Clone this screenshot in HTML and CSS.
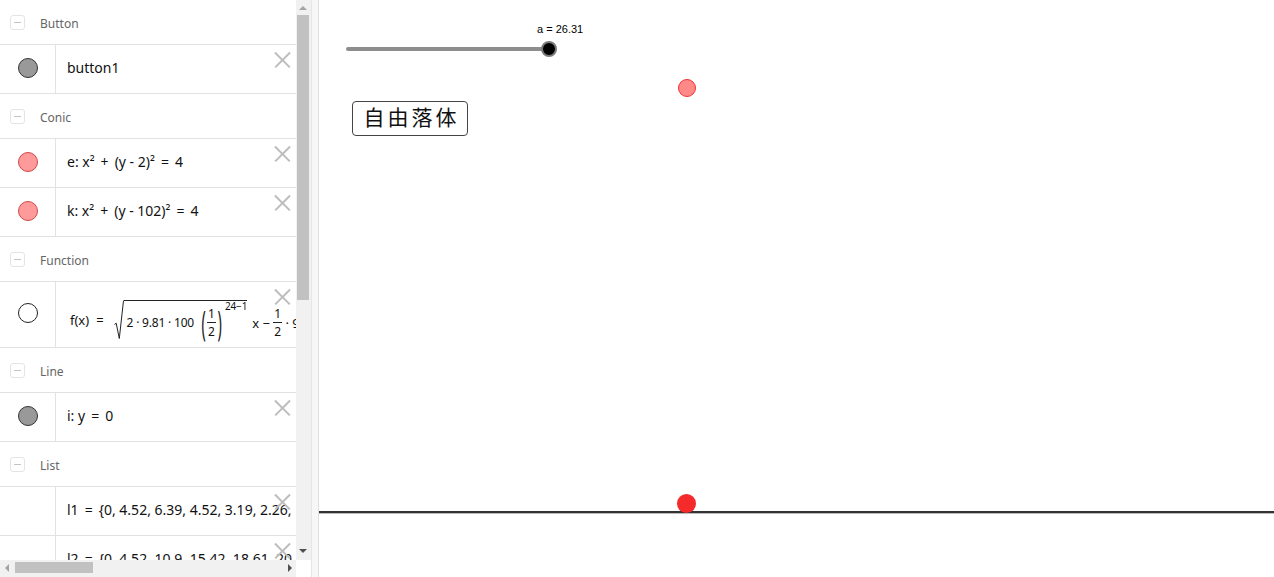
FILE: index.html
```html
<!DOCTYPE html>
<html>
<head>
<meta charset="utf-8">
<link rel="stylesheet" href="styles.css">
</head>
<body>
<div class="app">
  <div class="algebra">
    <div class="list">
      <div class="header"><span class="minus"></span><span class="hlabel">Button</span></div>
      <div class="item">
        <div class="marker"><span class="dot gray"></span></div>
        <div class="content">button1</div>
        <span class="close"></span>
      </div>
      <div class="header"><span class="minus"></span><span class="hlabel">Conic</span></div>
      <div class="item">
        <div class="marker"><span class="dot pink"></span></div>
        <div class="content">e: x²<span class="op">+</span>(y - 2)²<span class="op">=</span>4</div>
        <span class="close"></span>
      </div>
      <div class="item">
        <div class="marker"><span class="dot pink"></span></div>
        <div class="content">k: x²<span class="op">+</span>(y - 102)²<span class="op">=</span>4</div>
        <span class="close"></span>
      </div>
      <div class="header"><span class="minus"></span><span class="hlabel">Function</span></div>
      <div class="item tall">
        <div class="marker"><span class="dot empty"></span></div>
        <div class="content formula">
          <span class="fx">f(x)<span class="op wide">=</span></span>
          <span class="sqrt">
            <svg class="rad" width="10" height="40" viewBox="0 0 10 40"><path d="M0.5 24.5 L2.2 23.2 L5.3 38.5 L9.5 0.5" fill="none" stroke="#222" stroke-width="1"/></svg>
            <span class="radicand"><span class="num-run">2 · 9.81 · 100</span><span class="paren">(</span><span class="frac"><span class="num">1</span><span class="den">2</span></span><span class="paren">)</span><span class="exp">24−1</span></span>
          </span>
          <span class="after">x − <span class="frac"><span class="num">1</span><span class="den">2</span></span> · 9</span>
        </div>
        <span class="close"></span>
      </div>
      <div class="header"><span class="minus"></span><span class="hlabel">Line</span></div>
      <div class="item">
        <div class="marker"><span class="dot gray"></span></div>
        <div class="content">i: y<span class="op">=</span>0</div>
        <span class="close"></span>
      </div>
      <div class="header"><span class="minus"></span><span class="hlabel">List</span></div>
      <div class="item">
        <div class="marker"></div>
        <div class="content">l1<span class="op">=</span>{0, 4.52, 6.39, 4.52, 3.19, 2.26, 1.60, 1.13}</div>
        <span class="close"></span>
      </div>
      <div class="item">
        <div class="marker"></div>
        <div class="content">l2<span class="op">=</span>{0, 4.52, 10.9, 15.42, 18.61, 20.87, 22.47}</div>
        <span class="close"></span>
      </div>
    </div>
    <div class="vscroll">
      <span class="arrow up"></span>
      <span class="vthumb"></span>
      <span class="arrow down"></span>
    </div>
    <div class="hscroll">
      <span class="arrow left"></span>
      <span class="hthumb"></span>
      <span class="arrow right"></span>
    </div>
    <div class="corner"></div>
  </div>
  <div class="divider"></div>
  <div class="graphics">
    <div class="slider">
      <span class="track"></span>
      <span class="knob"></span>
      <span class="slabel">a = 26.31</span>
    </div>
    <div class="gbutton">自由落体</div>
    <span class="point upper"></span>
    <span class="axisline"></span>
    <span class="point lower"></span>
  </div>
</div>
</body>
</html>
```
FILE: styles.css
```css
html, body {
  margin: 0;
  padding: 0;
  background: #fff;
}
.app {
  width: 1274px;
  height: 577px;
  display: flex;
  overflow: hidden;
  font-family: "Noto Sans", "DejaVu Sans", sans-serif;
}
.algebra {
  width: 311px;
  height: 577px;
  display: grid;
  grid-template-columns: 296px 15px;
  grid-template-rows: 560px 17px;
}
.list {
  overflow: hidden;
  background: #fff;
}
.header {
  border-bottom: 1px solid #e2e2e2;
  display: flex;
  align-items: center;
  padding-top: 2px;
  box-sizing: border-box;
  height: 45px;
}
.minus {
  width: 15px;
  height: 15px;
  margin-left: 10px;
  margin-top: -1px;
  border: 1px solid #e4e4e4;
  border-radius: 3px;
  box-sizing: border-box;
  position: relative;
  flex: none;
}
.minus::after {
  content: "";
  position: absolute;
  left: 3px;
  right: 3px;
  top: 6px;
  height: 1px;
  background: #c4c4c4;
}
.hlabel {
  margin-left: 15px;
  font-size: 12px;
  color: #666;
}
.item {
  height: 49px;
  box-sizing: border-box;
  border-bottom: 1px solid #e2e2e2;
  display: flex;
  position: relative;
}
.item.tall {
  height: 66px;
}
.marker {
  width: 56px;
  flex: none;
  border-right: 1px solid #e2e2e2;
  display: flex;
  align-items: center;
  justify-content: center;
  padding-bottom: 3px;
  box-sizing: border-box;
}
.dot {
  width: 20px;
  height: 20px;
  border-radius: 50%;
  box-sizing: border-box;
}
.dot.gray {
  background: #999;
  border: 1px solid #333;
}
.dot.pink {
  background: #ff9a9a;
  border: 1px solid #d04848;
}
.dot.empty {
  background: #fff;
  border: 1px solid #222;
}
.content {
  padding-left: 11px;
  padding-bottom: 4px;
  display: flex;
  align-items: center;
  white-space: nowrap;
  font-size: 14px;
  color: #111;
  overflow: hidden;
  flex: 1;
}
.content > * {
  flex: none;
}
.op {
  margin: 0 6px;
}
.op.wide {
  margin: 0 6px 0 7px;
}
.close {
  position: absolute;
  left: 274px;
  top: 6px;
  width: 17px;
  height: 17px;
}
.close::before, .close::after {
  content: "";
  position: absolute;
  left: -2px;
  top: 8px;
  width: 21px;
  height: 1.6px;
  background: #bdbdbd;
  transform: rotate(45deg);
}
.close::after {
  transform: rotate(-45deg);
}
.formula {
  font-size: 13px;
  padding-left: 14px;
  padding-bottom: 0;
  padding-top: 10px;
}
.fx {
  margin-right: 4px;
  display: inline-flex;
  align-items: center;
}
.sqrt {
  display: inline-flex;
  align-items: stretch;
  height: 40px;
}
.rad {
  display: block;
  flex: none;
}
.radicand {
  border-top: 1px solid #222;
  display: inline-flex;
  align-items: center;
  padding: 5px 0 0 3px;
  box-sizing: border-box;
  white-space: pre;
  flex: none;
}
.radicand > * {
  flex: none;
}
.num-run {
  font-size: 12px;
  letter-spacing: -0.2px;
}
.paren {
  display: inline-block;
  font-size: 17px;
  line-height: 17px;
  margin: 0 1px 0 7px;
  transform: scale(0.85, 2);
  color: #222;
}
.paren + .frac + .paren {
  margin: 0 0 0 1px;
}
.frac {
  display: inline-flex;
  flex-direction: column;
  align-items: center;
  font-size: 12px;
  line-height: 14px;
}
.num {
  border-bottom: 1px solid #222;
  padding: 0 1px 1px;
}
.den {
  padding-top: 2px;
}
.exp {
  font-size: 10px;
  line-height: 12px;
  align-self: flex-start;
  margin-top: -6px;
  margin-left: 3px;
  letter-spacing: -0.2px;
}
.after {
  display: inline-flex;
  align-items: center;
  white-space: pre;
  margin-left: 5px;
  padding-top: 6px;
}
.vscroll {
  background: #f1f1f1;
  position: relative;
}
.vthumb {
  position: absolute;
  left: 1px;
  right: 2px;
  top: 15px;
  height: 285px;
  background: #c1c1c1;
}
.arrow {
  position: absolute;
  width: 0;
  height: 0;
  border: 4px solid transparent;
}
.arrow.up {
  left: 3px;
  top: 2px;
  border-bottom-color: #a3a3a3;
}
.arrow.down {
  left: 3px;
  top: 549px;
  border-top-color: #505050;
}
.hscroll {
  background: #f1f1f1;
  position: relative;
}
.hthumb {
  position: absolute;
  left: 15px;
  width: 78px;
  top: 2px;
  height: 11px;
  background: #c1c1c1;
}
.arrow.left {
  left: 1px;
  top: 4px;
  border-right-color: #a3a3a3;
}
.arrow.right {
  left: 288px;
  top: 4px;
  border-left-color: #505050;
}
.corner {
  background: #fff;
}
.divider {
  width: 6px;
  flex: none;
  background: #f7f7f7;
  border-left: 1px solid #e6e6e6;
  border-right: 1px solid #e0e0e0;
}
.graphics {
  flex: 1;
  position: relative;
  background: #fff;
  font-family: "Liberation Sans", Arial, sans-serif;
}
.slider {
  position: absolute;
  left: 0;
  top: 0;
}
.track {
  position: absolute;
  left: 27px;
  top: 47px;
  width: 204px;
  height: 4px;
  border-radius: 2px;
  background: #8d8d8d;
}
.knob {
  position: absolute;
  left: 222px;
  top: 41px;
  width: 12px;
  height: 12px;
  border-radius: 50%;
  background: #000;
  border: 2px solid #7a7a7a;
}
.slabel {
  position: absolute;
  left: 218px;
  top: 23px;
  font-size: 11px;
  color: #000;
  white-space: nowrap;
}
.gbutton {
  position: absolute;
  left: 33px;
  top: 101px;
  width: 116px;
  height: 35px;
  box-sizing: border-box;
  border: 1px solid #444;
  border-radius: 4px;
  display: flex;
  align-items: center;
  justify-content: center;
  font-family: "Noto Sans CJK SC", sans-serif;
  font-size: 21px;
  letter-spacing: 3px;
  padding-left: 3px;
  padding-bottom: 5px;
  color: #111;
}
.point {
  position: absolute;
  width: 18px;
  height: 18px;
  border-radius: 50%;
  box-sizing: border-box;
}
.point.upper {
  left: 359px;
  top: 79px;
  background: #f88;
  border: 1.5px solid #e33;
}
.point.lower {
  left: 358px;
  top: 494px;
  width: 19px;
  height: 19px;
  background: #f52a2a;
}
.axisline {
  position: absolute;
  left: 0;
  right: 0;
  top: 511px;
  height: 2px;
  background: #333;
  border-bottom: 1px solid #bbb;
}
```
